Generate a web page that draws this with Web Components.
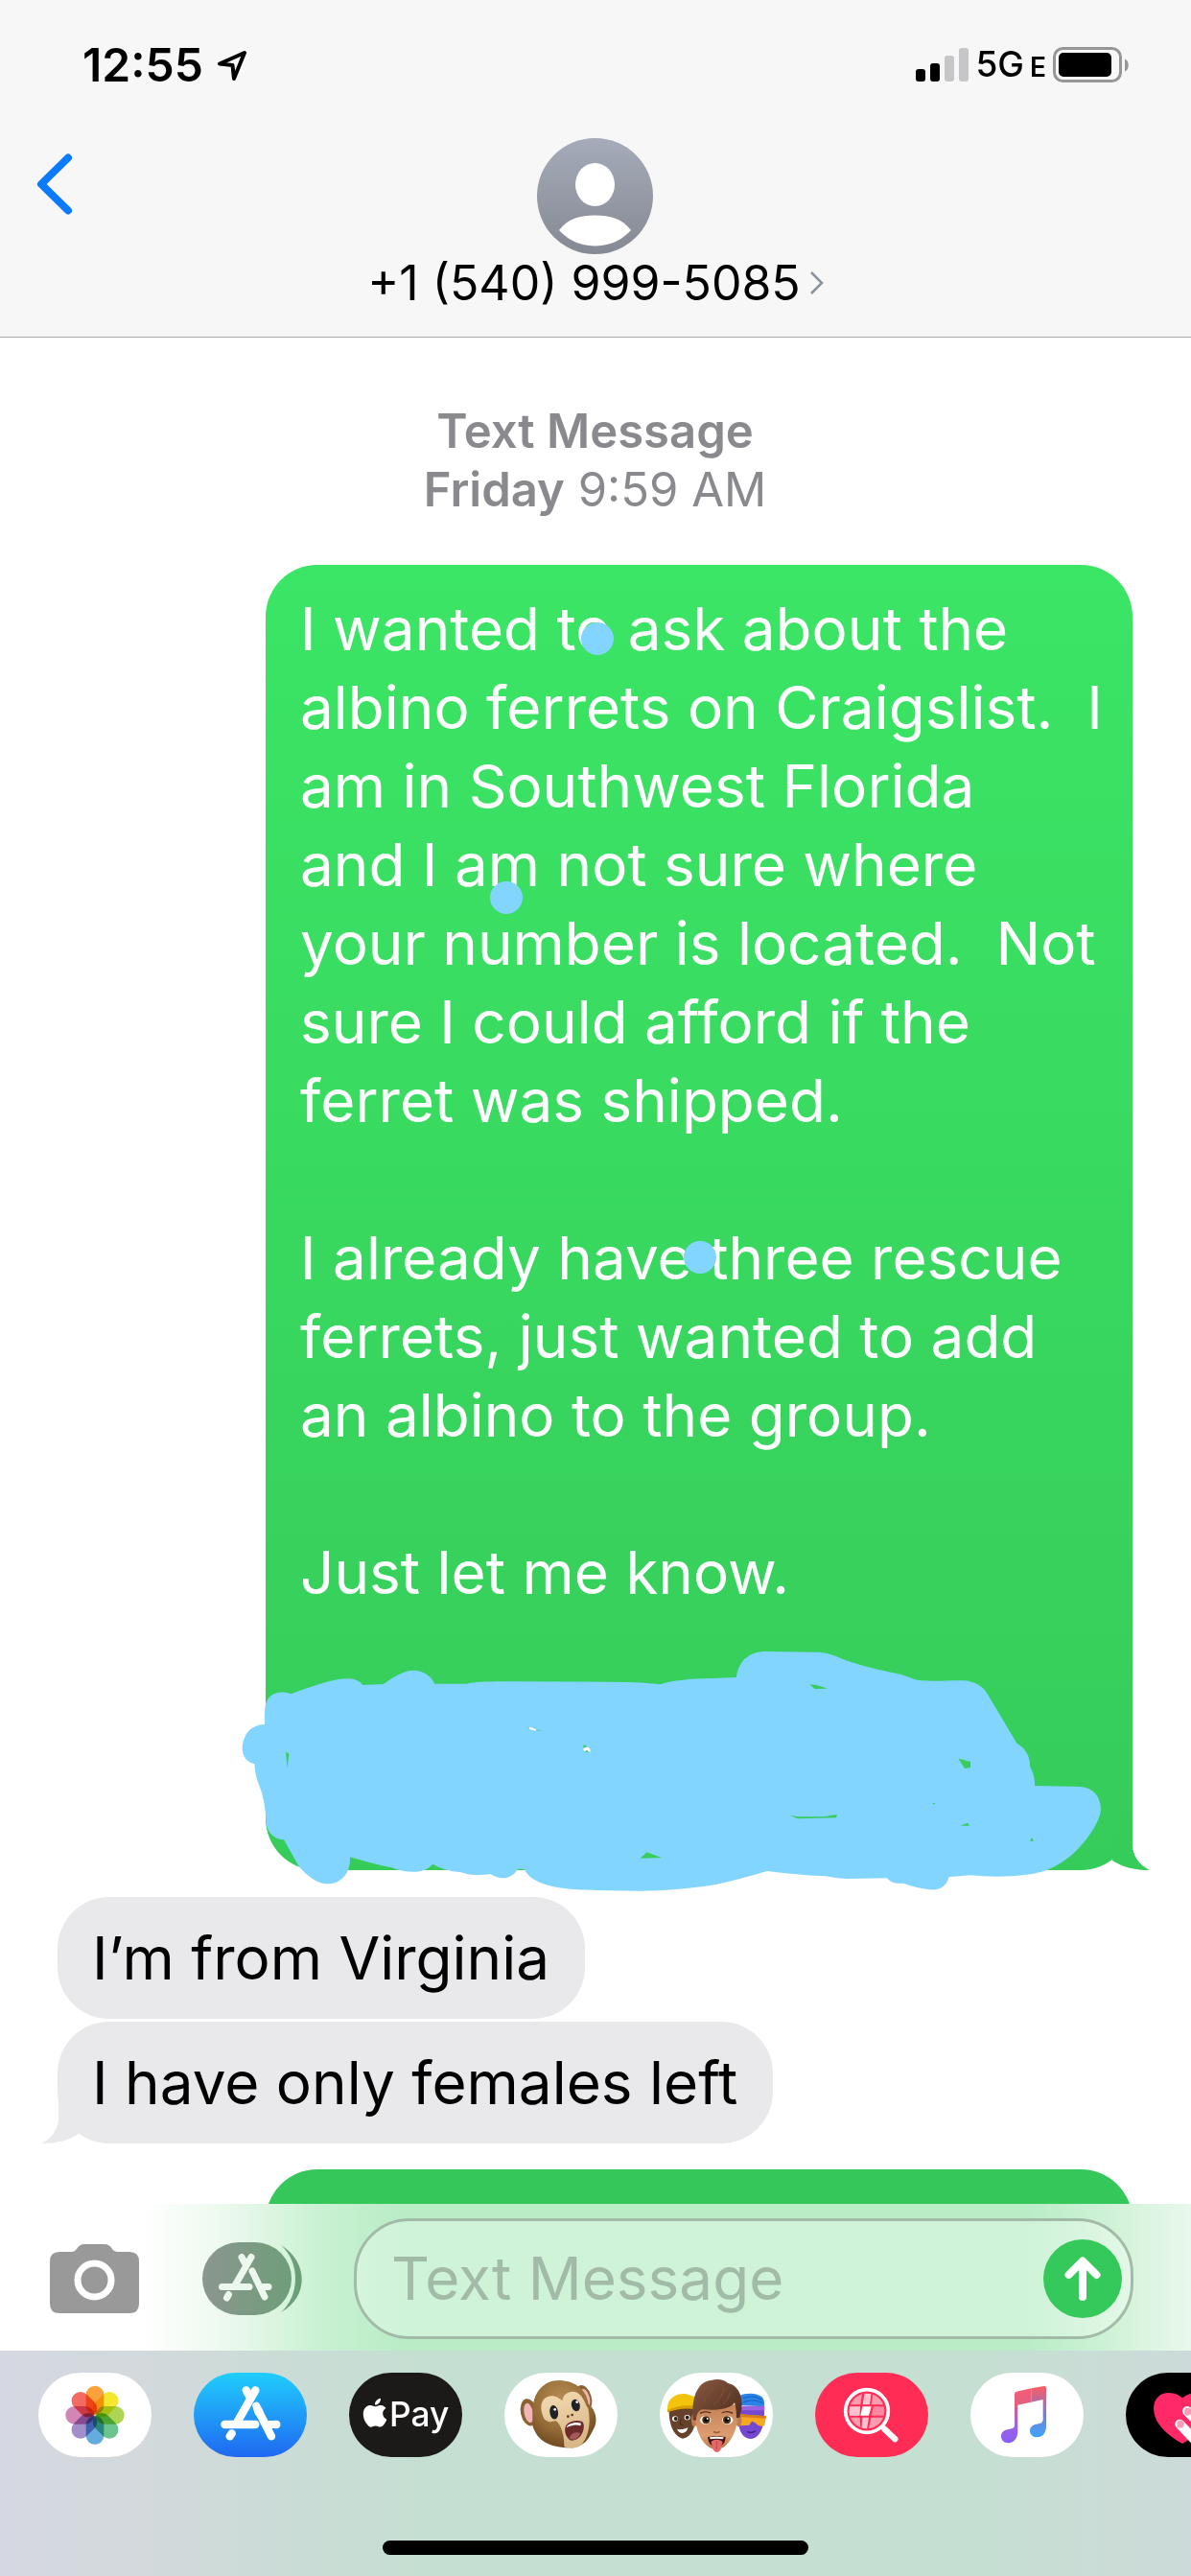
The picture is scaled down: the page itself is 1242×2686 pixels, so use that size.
<!DOCTYPE html>
<html lang="en">
<head>
<meta charset="utf-8">
<meta name="viewport" content="width=device-width, initial-scale=1">
<title>Messages</title>
<style>
  html, body { margin: 0; height: 100%; }
  body { font-family: Inter, "Liberation Sans", sans-serif; color: #000; background: #fff; }
</style>
</head>
<body>
<messages-screen></messages-screen>

<template id="t-screen">
  <style>
    :host { display: flex; flex-direction: column; height: 100vh; overflow: hidden; }
    header { background: #f8f7f8; border-bottom: 1px solid #a9a8ab; }
    main { flex: 1; min-height: 0; overflow: hidden; }
  </style>
  <header>
    <status-bar></status-bar>
    <contact-bar>+1 (540) 999-5085</contact-bar>
  </header>
  <main>
    <message-thread>
      <time-stamp><b slot="kind">Text Message</b><b slot="day">Friday</b>9:59 AM</time-stamp>
      <message-bubble side="sent" tail>I wanted to ask about the
albino ferrets on Craigslist.  I
am in Southwest Florida
and I am not sure where
your number is located.  Not
sure I could afford if the
ferret was shipped.

I already have three rescue
ferrets, just wanted to add
an albino to the group.

Just let me know.<ink-cover slot="after"></ink-cover></message-bubble>
      <message-bubble side="received">I’m from Virginia</message-bubble>
      <message-bubble side="received" tail>I have only females left</message-bubble>
      <message-bubble side="sent" next></message-bubble>
    </message-thread>
  </main>
  <message-composer></message-composer>
  <app-drawer></app-drawer>
</template>

<template id="t-status">
  <style>
    :host { display: flex; align-items: center; justify-content: space-between; padding: 40px 64px 48px 86px; line-height: 56px; }
    .left, .right { display: flex; align-items: center; }
    .left { gap: 14px; font-size: 48px; font-weight: 600; }
    .right { gap: 7px; }
    .net { font-size: 37px; font-weight: 500; display: flex; align-items: baseline; gap: 6px; line-height: 40px; }
    .net small { font-size: 28px; font-weight: 600; }
    svg { display: block; }
  </style>
  <div class="left"><span>12:55</span>
    <svg width="32" height="33" viewBox="0 0 32 33" fill="none" stroke="#000" stroke-width="4" stroke-linejoin="round"><path d="M29 3 L3 14.500 L16.500 16 L18 30 Z"/></svg>
  </div>
  <div class="right">
    <svg width="56" height="36" viewBox="0 0 56 36"><rect x="0" y="22" width="10" height="13" rx="3"/><rect x="15" y="16" width="10" height="19" rx="3"/><rect x="30" y="8" width="10" height="27" rx="3" fill="#c6c5c7"/><rect x="45" y="0" width="10" height="35" rx="3" fill="#c6c5c7"/></svg>
    <div class="net"><span>5G</span><small>E</small></div>
    <svg width="80" height="38" viewBox="0 0 80 38"><rect x="1.500" y="1.500" width="69" height="34" rx="9" fill="none" stroke="#969597" stroke-width="3"/><rect x="6" y="6" width="55" height="25" rx="5"/><path d="M75 12.500c5 2 5 11 0 13z" fill="#969597"/></svg>
  </div>
</template>

<template id="t-contact">
  <style>
    :host { display: grid; grid-template-columns: 1fr auto 1fr; padding: 0 38px 26px; }
    button { border: 0; background: none; padding: 0; font: inherit; color: inherit; }
    .back { justify-self: start; align-self: start; margin-top: 16px; }
    .who { display: flex; flex-direction: column; align-items: center; }
    .name { display: flex; align-items: center; gap: 9px; font-size: 50px; line-height: 60px; }
    svg { display: block; }
  </style>
  <button class="back" aria-label="Back"><svg width="38" height="64" viewBox="0 0 38 64" fill="none" stroke="#0a7aff" stroke-width="8" stroke-linecap="round" stroke-linejoin="round"><path d="M33 4.500 L5 32 L33 59.500"/></svg></button>
  <button class="who">
    <svg width="121" height="121" viewBox="0 0 121 121"><defs><linearGradient id="g" x2="0" y2="1"><stop stop-color="#a5abb9"/><stop offset="1" stop-color="#858993"/></linearGradient></defs><circle cx="60.500" cy="60.500" r="60.500" fill="url(#g)"/><ellipse cx="60.500" cy="48.500" rx="20.500" ry="22.500" fill="#fff"/><path d="M23 96 C32 84 45 80.500 60.500 80.500 S89 84 98 96 C88 107 75 112.500 60.500 112.500 S33 107 23 96Z" fill="#fff"/></svg>
    <span class="name"><slot></slot><svg width="15" height="26" viewBox="0 0 15 26" fill="none" stroke="#87929c" stroke-width="2.500"><path d="M2 2 L13 13 L2 24"/></svg></span>
  </button>
</template>

<template id="t-thread">
  <style>:host { display: flex; flex-direction: column; padding: 67px 61px 0 60px; }</style>
  <slot></slot>
</template>

<template id="t-stamp">
  <style>
    :host { display: block; text-align: center; color: #8a898e; font-size: 49px; line-height: 61px; margin-bottom: 48px; }
    ::slotted(b) { font-weight: 600; }
  </style>
  <div><slot name="kind"></slot></div>
  <div><slot name="day"></slot> <slot></slot></div>
</template>

<template id="t-bubble">
  <style>
    :host { display: block; position: relative; box-sizing: border-box; border-radius: 54px; padding: 23px 37px 22px 36px; font-size: 62px; line-height: 82px; min-height: 127px; }
    :host([side="sent"]) { align-self: flex-end; width: min(904px, 90%); padding: 26px 24px 23px 36px; color: #fff; background: linear-gradient(#3be565, #36cc5a); margin-bottom: 28px; }
    :host([next]) { background: #35c759; margin-top: 24px; }
    :host([side="received"]) { align-self: flex-start; background: #e9e9eb; margin-bottom: 3px; }
    .text { white-space: pre-wrap; }
    .tail { position: absolute; bottom: 0; width: 50px; height: 60px; display: none; }
    :host([tail]) .tail { display: block; }
    :host([side="sent"]) .tail { right: -18px; fill: #36cc5a; }
    :host([side="received"]) .tail { left: -17px; fill: #e9e9eb; transform: scaleX(-1); }
  </style>
  <svg class="tail" viewBox="0 0 50 60"><path d="M20 0 H32 V35 C33 47 40 55 50 60 C34 60 22 57 11 50 Z"/></svg>
  <div class="text"><slot></slot></div>
  <slot name="after"></slot>
</template>

<template id="t-ink">
  <style>
    :host { display: block; height: 246px; }
    svg { position: absolute; overflow: visible; fill: #82d5ff; pointer-events: none; }
    .cover { left: -37px; bottom: -40px; width: 1002px; height: 300px; }
    .dots { left: 0; top: 0; width: 904px; height: 760px; }
  </style>
  <svg class="dots" viewBox="0 0 904 760"><circle cx="346" cy="77" r="17"/><circle cx="251" cy="347" r="17"/><circle cx="453" cy="722" r="17"/></svg>
  <svg class="cover" viewBox="0 0 3006 900">
    <path d="M110 265 C118 230 150 215 192 229 C220 215 250 208 282 197 C320 185 390 165 415 201 L480 198 C505 180 540 155 575 155 C605 155 630 175 640 197 L740 197 C770 190 810 190 900 190 L1200 191 Q1300 192 1345 199 C1380 188 1430 181 1500 180 L1584 177 C1590 125 1625 96 1675 96 L1830 98 C1865 98 1885 106 1915 119 C1960 137 2030 153 2090 166 C2125 174 2135 185 2160 187 C2200 190 2240 187 2290 187 C2330 188 2355 205 2370 230 L2461 383 C2490 400 2503 425 2502 455 C2514 478 2519 500 2517 516 L2660 519 C2700 522 2724 550 2724 590 C2722 625 2690 670 2665 700 C2630 742 2590 765 2553 781 C2500 800 2400 804 2315 796 L2249 801 C2240 835 2215 843 2190 841 C2160 837 2130 830 2105 821 C2080 823 2067 819 2055 805 L1930 807 C1900 807 1885 802 1865 799 C1800 797 1740 790 1680 783 C1620 800 1560 818 1500 828 C1430 838 1360 845 1280 845 L1150 843 C1060 841 950 837 920 777 L900 776 C880 812 840 810 815 792 C775 797 750 797 720 786 C690 785 660 776 634 761 C610 790 560 793 505 772 C460 764 420 752 375 739 C378 790 345 824 305 823 C270 823 240 797 215 768 L168 685 C130 682 112 655 112 620 C110 580 104 555 98 535 C86 500 78 485 76 448 C50 443 38 420 38 400 C40 350 70 325 108 324 Q107 290 110 265Z"/>
    <g fill="#37cd5b"><path d="M174 410l10 6-5 45zM926 334l58 12-32-4zM1104 389h8l18 22h-18zM1283 743l20-19 47 17zM1813 199l24 3 32 10-40 1zM1750 608l27 5h80l42-7-3 10-120 3zM2278 431l38 10v18l-18 3zM2285 641l23-9 5 9zM2502 689l6-11 6 11zM2198 570h8l-4 6z"/></g>
    <path fill="#fff" d="M936 332l22 8-2 4-20-5zM1104 402c8-12 22-10 24 8h-6l-5-5-8 4z"/>
  </svg>
</template>

<template id="t-composer">
  <style>
    :host { display: flex; align-items: center; padding: 15px 60px 12px 52px; background: linear-gradient(90deg, #fff 12%, #ecf9ee 19%, #c9f1d2 27%, #b8edc6 34%, #b8edc6 86%, #cbf1d4 92%, #e9f8ec 100%); }
    button { border: 0; background: none; padding: 0; display: block; }
    svg { display: block; }
    .apps { margin: 0 53px 0 66px; }
    .field { flex: 1; min-width: 0; box-sizing: border-box; height: 126px; border: 3px solid #a2bba8; border-radius: 58px; display: flex; align-items: center; padding: 0 9px 0 36px; background: rgba(255,255,255,.32); }
    input { flex: 1; min-width: 0; border: 0; outline: 0; padding: 0; background: none; font: inherit; font-size: 62px; line-height: 82px; height: 82px; }
    input::placeholder { color: #a2bba8; opacity: 1; }
  </style>
  <button aria-label="Camera"><svg width="93" height="72" viewBox="0 0 93 72"><path fill="#999" d="M10 8 H22 Q26 8 28 5 Q31 0 36 0 H57 Q62 0 65 5 Q67 8 71 8 H83 Q93 8 93 18 V62 Q93 72 83 72 H10 Q0 72 0 62 V18 Q0 8 10 8Z"/><circle cx="46.500" cy="37.500" r="17.500" fill="#999" stroke="#fff" stroke-width="7"/></svg></button>
  <button class="apps" aria-label="Apps"><svg width="105" height="76" viewBox="0 0 105 76">
    <defs><linearGradient id="c" gradientUnits="userSpaceOnUse" x1="0" x2="105" y1="0" y2="0"><stop stop-color="#8c968e"/><stop offset="1" stop-color="#6a9f78"/></linearGradient></defs>
    <rect width="93" height="76" rx="38" fill="url(#c)"/><path d="M82 3 C110 20 112 56 82 73 C102 55 102 21 82 3Z" fill="url(#c)"/>
    <g fill="none" stroke="#ecf8ee" stroke-width="7" stroke-linecap="round"><path d="M41 15.500 L44.500 22M51 15.500 L34 45M52 30 L65 57M20.500 46.500 H49M61 46.500 H69M27.500 54.500 L25.500 58"/></g></svg></button>
  <div class="field">
    <input type="text" placeholder="Text Message" aria-label="Text Message">
    <button aria-label="Send"><svg width="82" height="82" viewBox="0 0 82 82"><circle cx="41" cy="41" r="41" fill="#35c85a"/><path d="M41 60 V24 M26.500 37 L41 22.500 L55.500 37" fill="none" stroke="#fff" stroke-width="8" stroke-linecap="round" stroke-linejoin="round"/></svg></button>
  </div>
</template>

<template id="t-drawer">
  <style>
    :host { display: block; overflow: hidden; padding: 23px 0 22px; background: linear-gradient(90deg, #d5d8e2 0%, #d3d9dc 12%, #cadcd6 25%, #c5dfd2 36%, #c5dfd2 82%, #cbdcd7 94%, #ccdbd9 100%); }
    nav { display: flex; gap: 44px; padding-left: 40px; }
    .home { width: 444px; height: 15px; border-radius: 8px; background: #000; margin: 87px auto 0; }
  </style>
  <nav aria-label="Apps">
    <app-pill label="Photos" style="--fill:#fff"><svg viewBox="0 0 354 264"><g id="petals" transform="translate(177 133)" style="isolation:isolate"></g></svg></app-pill>
    <app-pill label="App Store" style="--fill:linear-gradient(#20cefc,#1f68f1)"><svg viewBox="0 0 354 264" fill="none" stroke="#fff" stroke-width="25" stroke-linecap="round"><path d="M164 55 L176 76M193 55 L136 155M97 162 H193M255 162 H259M119 190 L113 199M203 120 L243 199"/><path d="M236 162 H258M196 104 L206 124" stroke-width="24"/><path d="M190 92 C184 108 186 120 196 136 L212 128 Z" fill="#fff" stroke="none"/></svg></app-pill>
    <app-pill label="Apple Pay" style="--fill:#1b1a18"><svg viewBox="0 0 354 264"><path transform="translate(36 80) scale(3.750)" fill="#fff" d="M12.152 6.896c-.948 0-2.415-1.078-3.960-1.040-2.040.027-3.910 1.183-4.961 3.014-2.117 3.675-.546 9.103 1.519 12.090 1.013 1.454 2.208 3.090 3.792 3.039 1.520-.065 2.090-.987 3.935-.987 1.831 0 2.350.987 3.960.948 1.637-.026 2.676-1.480 3.676-2.948 1.156-1.688 1.636-3.325 1.662-3.415-.039-.013-3.182-1.221-3.220-4.857-.026-3.040 2.480-4.494 2.597-4.559-1.429-2.090-3.623-2.324-4.390-2.376-2-.156-3.675 1.090-4.610 1.090zM15.530 3.830c.843-1.012 1.400-2.427 1.245-3.830-1.207.052-2.662.805-3.532 1.818-.780.896-1.454 2.338-1.273 3.714 1.338.104 2.715-.688 3.559-1.701"/><text x="126" y="168" font-size="106" font-weight="500" fill="#fff">Pay</text></svg></app-pill>
    <app-pill label="Animoji" style="--fill:#fff"><svg viewBox="0 0 354 264">
      <defs><radialGradient id="m" cx=".45" cy=".3" r=".75"><stop stop-color="#b98f56"/><stop offset=".6" stop-color="#936936"/><stop offset="1" stop-color="#66431d"/></radialGradient><linearGradient id="mf" x2=".3" y2="1"><stop stop-color="#f3ddb4"/><stop offset="1" stop-color="#d9b787"/></linearGradient></defs>
      <ellipse cx="77" cy="124" rx="26" ry="43" fill="#8a6233" transform="rotate(-12 77 124)"/><ellipse cx="76" cy="126" rx="14" ry="31" fill="#f0b5b4" transform="rotate(-12 76 126)"/>
      <ellipse cx="249" cy="78" rx="23" ry="40" fill="#8a6233" transform="rotate(-18 249 78)"/><ellipse cx="254" cy="78" rx="12" ry="28" fill="#f0b5b4" transform="rotate(-18 254 78)"/>
      <path d="M88 130 C86 65 120 24 172 24 C225 26 257 55 263 98 C290 120 292 155 278 178 C262 214 240 236 205 235 C160 234 105 225 88 165Z" fill="url(#m)"/>
      <path d="M124 144 C100 92 128 68 158 74 C172 78 178 86 181 88 C185 64 206 54 228 62 C250 76 252 100 262 112 C272 160 262 205 238 228 C222 238 202 236 187 232 C188 200 178 160 160 150 C145 156 132 154 124 144Z" fill="url(#mf)"/>
      <ellipse cx="155" cy="124" rx="13" ry="22" transform="rotate(-8 155 124)" fill="#202226"/><ellipse cx="223" cy="102" rx="13" ry="19" transform="rotate(-16 223 102)" fill="#202226"/><circle cx="158" cy="115" r="4" fill="#fff"/><circle cx="227" cy="92" r="4" fill="#fff"/>
      <circle cx="199" cy="137" r="4" fill="#573618"/><circle cx="212" cy="132" r="4" fill="#573618"/>
      <path d="M190 174 C192 155 220 146 242 152 C252 158 250 180 240 196 C230 210 212 215 204 210 C192 200 188 186 190 174Z" fill="#6d2b2b"/><path d="M194 172 C196 160 222 152 240 158 L238 166 C222 160 206 166 194 172Z" fill="#fff"/><path d="M203 205 C208 190 222 182 238 190 C230 208 214 214 203 205Z" fill="#a45757"/>
    </svg></app-pill>
    <app-pill label="Memoji" style="--fill:#fff"><svg viewBox="0 0 354 264">
      <defs><linearGradient id="h" x2="1" y2="1"><stop stop-color="#8a5a40"/><stop offset="1" stop-color="#4a2b1e"/></linearGradient><linearGradient id="s" x2="0" y2="1"><stop stop-color="#c58156"/><stop offset=".7" stop-color="#dc9d70"/><stop offset="1" stop-color="#b8744a"/></linearGradient></defs>
      <path d="M29 115 C28 165 45 200 72 206 C95 202 108 180 112 150 L108 105Z" fill="#66422d"/><path d="M24 118 C22 82 48 64 80 66 L112 76 V112 C80 108 50 112 24 124Z" fill="#f2c40c"/><path d="M24 118 C50 104 80 100 112 104 V114 C80 110 50 114 24 124Z" fill="#d99e05"/>
      <ellipse cx="48" cy="144" rx="9" ry="8" fill="#fff"/><ellipse cx="86" cy="140" rx="9" ry="8" fill="#fff"/><circle cx="50" cy="144" r="6" fill="#2d1b13"/><circle cx="86" cy="140" r="6" fill="#2d1b13"/><path d="M54 176 C68 180 78 176 88 172 C84 192 62 196 54 176Z" fill="#fff"/><path d="M66 146 q-6 20 8 18" fill="none" stroke="#472c1e" stroke-width="4"/>
      <path d="M246 108 H326 C330 150 322 204 285 207 C262 206 248 188 246 150Z" fill="#7549cf"/><path d="M250 72 C268 62 306 62 322 78 C328 88 328 100 326 106 L250 102Z" fill="#2a83e6"/><path d="M262 80 q30 -12 56 4 M262 92 q30 -12 60 2" stroke="#1965c4" stroke-width="4" fill="none"/><path d="M258 104 H328 V118 H258Z" fill="#9a62e0"/><path d="M250 130 L333 136 L328 166 Q308 170 298 156 L288 152 L280 164 L252 166Z" fill="#f6a821"/><path d="M250 130 L333 136 L332 143 L250 138Z" fill="#d87b1b"/><path d="M274 184 q12 8 26 -2" stroke="#42218d" stroke-width="5" fill="none"/>
      <ellipse cx="108" cy="148" rx="9" ry="22" fill="#bf7c52"/><ellipse cx="247" cy="148" rx="9" ry="22" fill="#bf7c52"/>
      <path d="M110 100 C106 160 122 214 156 234 C170 242 186 242 198 234 C230 212 248 165 246 100 Z" fill="url(#s)"/>
      <path d="M104 148 C98 70 122 28 160 24 C180 18 200 20 212 32 C246 40 258 72 257 104 L250 140 L240 142 C240 122 238 106 234 94 C222 112 180 120 134 115 C120 118 114 132 114 150 Z" fill="url(#h)"/>
      <path d="M138 96 Q146 56 182 38 M168 100 Q196 78 202 48 M198 100 Q218 82 220 60" stroke="#7f523b" stroke-width="3" fill="none"/>
      <path d="M126 127 Q142 119 160 126 M194 126 Q212 117 228 127" stroke="#53301f" stroke-width="4" fill="none"/>
      <ellipse cx="143" cy="148" rx="17" ry="13" fill="#fff"/><ellipse cx="212" cy="148" rx="17" ry="13" fill="#fff"/><circle cx="145" cy="148" r="12" fill="#4d2e12"/><circle cx="210" cy="148" r="12" fill="#4d2e12"/><circle cx="145" cy="148" r="6"/><circle cx="210" cy="148" r="6"/><circle cx="149" cy="144" r="3" fill="#fff"/><circle cx="214" cy="144" r="3" fill="#fff"/>
      <path d="M168 184 Q178 191 188 184" stroke="#995a35" stroke-width="5" fill="none"/><path d="M150 201 Q178 196 206 201 Q204 226 190 228 L164 228 Q152 222 150 201Z" fill="#3e1515"/><path d="M156 202 Q178 198 200 202 L198 208 Q178 204 158 208Z" fill="#fff"/><path d="M160 216 Q178 202 197 216 L190 242 Q178 256 168 242Z" fill="#e66769"/><path d="M178 214 V240" stroke="#bd4650" stroke-width="3"/>
    </svg></app-pill>
    <app-pill label="Images" style="--fill:#ff2d55"><svg viewBox="0 0 354 264">
      <path d="M217 176 L250 208" stroke="#fff" stroke-width="19" stroke-linecap="round"/><clipPath id="l"><circle cx="162" cy="120" r="55"/></clipPath>
      <circle cx="162" cy="120" r="67" fill="#ff2d55" stroke="#fff" stroke-width="11"/>
      <g clip-path="url(#l)" fill="#ff9cb0"><path d="M100 60H148L142 100H100zM100 107H141L140 134H100zM100 140H140L142 190H100z"/><path d="M182 60H225V100H176zM175 140H225V190H165z" fill="#ff9cb0"/><path d="M155 60H176L171 100H149zM148 140H168L160 190H144z" fill="#ffc2ce"/><path d="M148 106H176L168 134H142z" fill="#fff"/><path d="M183 106H225V134H175z" fill="#ff87a0"/><path d="M100 106H141L138 134H100z" fill="#ffc2ce"/></g>
    </svg></app-pill>
    <app-pill label="Music" style="--fill:#fff"><svg viewBox="0 0 354 264">
      <defs><linearGradient id="n" gradientUnits="userSpaceOnUse" x1="165" y1="45" x2="180" y2="215"><stop stop-color="#fb5c74"/><stop offset=".3" stop-color="#e0607f"/><stop offset=".62" stop-color="#a066d6"/><stop offset="1" stop-color="#8a5cff"/></linearGradient><linearGradient id="n2" gradientUnits="userSpaceOnUse" x1="225" y1="45" x2="215" y2="200"><stop stop-color="#fb5c64"/><stop offset=".5" stop-color="#8079c8"/><stop offset="1" stop-color="#3fa3ff"/></linearGradient></defs>
      <path fill="url(#n)" d="M138 66 Q138 60 144 59 L190 49 V92 L148 101 V184 C148 206 134 220 118 220 C104 220 96 210 96 199 C96 187 105 180 116 178 L130 175 Q138 173 138 165Z"/>
      <path fill="url(#n2)" d="M190 49 L230 42 Q237 41 237 48 V168 C237 190 224 202 209 202 C196 202 186 194 186 182 C186 170 195 163 206 161 L220 158 Q227 156 227 148 V84 L190 92Z"/>
    </svg></app-pill>
    <app-pill label="Digital Touch" style="--fill:#000"><svg viewBox="0 0 354 264"><path d="M177 222 C130 196 88 160 87 112 C88 80 108 63 134 63 C155 63 168 72 177 79 C186 72 199 63 220 63 C250 66 267 84 267 112 C266 160 224 196 177 222Z" fill="#ff2968"/><path d="M169 161 L220 215 M192 120 L250 180" stroke="#fff" stroke-width="30" stroke-linecap="round"/><ellipse cx="171" cy="161" rx="11" ry="12" fill="#ff9cba"/><ellipse cx="194" cy="122" rx="11" ry="12" fill="#ff9cba"/></svg></app-pill>
  </nav>
  <div class="home"></div>
</template>

<template id="t-pill">
  <style>
    :host { display: block; flex: none; }
    button { display: block; width: 118px; height: 88px; border: 0; padding: 0; border-radius: 48px; overflow: hidden; background: var(--fill); font: inherit; }
    ::slotted(svg) { display: block; width: 118px; height: 88px; }
  </style>
  <button><slot></slot></button>
</template>

<script>
  const define = (tag, id, ready) => customElements.define(tag, class extends HTMLElement {
    constructor() {
      super();
      this.attachShadow({ mode: "open" }).append(document.getElementById(id).content.cloneNode(true));
    }
    connectedCallback() { if (ready) ready(this); }
  });

  define("status-bar", "t-status");
  define("contact-bar", "t-contact");
  define("message-thread", "t-thread");
  define("time-stamp", "t-stamp");
  define("message-bubble", "t-bubble");
  define("ink-cover", "t-ink");
  define("message-composer", "t-composer");
  define("app-pill", "t-pill", el => el.shadowRoot.querySelector("button").setAttribute("aria-label", el.getAttribute("label")));
  define("app-drawer", "t-drawer", el => {
    const colors = ["#f9a13a", "#f5e62e", "#aed456", "#6cc58e", "#65acde", "#a28fca", "#d385b5", "#f46a62"];
    el.shadowRoot.getElementById("petals").innerHTML = colors.map((c, i) =>
      `<rect x="-28" y="-92" width="56" height="90" rx="28" fill="${c}" transform="rotate(${i * 45})" style="mix-blend-mode:multiply"/>`).join("");
  });
  define("messages-screen", "t-screen");
</script>
</body>
</html>
